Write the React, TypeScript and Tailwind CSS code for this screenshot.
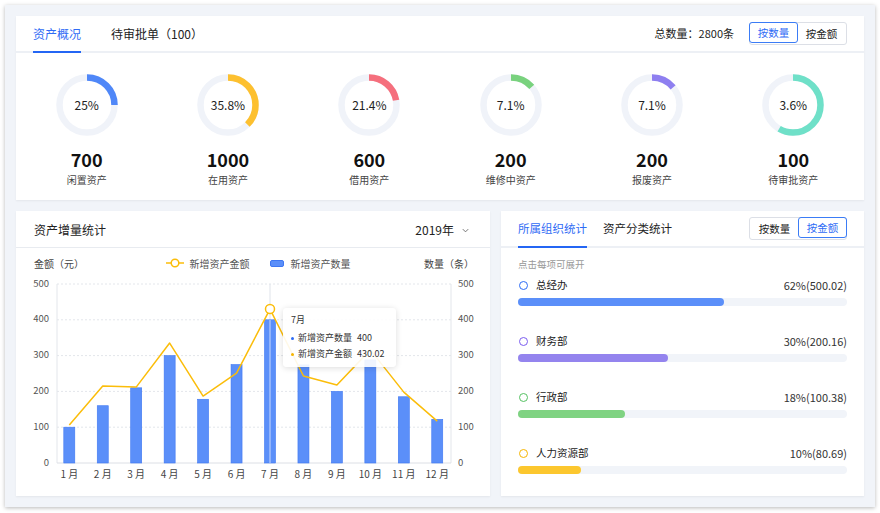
import React from 'react'

const donuts = [
  { pct: '25%', deg: 90, color: '#4f87f8', value: 700, label: '闲置资产' },
  { pct: '35.8%', deg: 135, color: '#fdc02f', value: 1000, label: '在用资产' },
  { pct: '21.4%', deg: 80, color: '#f56f7d', value: 600, label: '借用资产' },
  { pct: '7.1%', deg: 49, color: '#79d27e', value: 200, label: '维修中资产' },
  { pct: '7.1%', deg: 50, color: '#8e7ff0', value: 200, label: '报废资产' },
  { pct: '3.6%', deg: 210, color: '#6fe0c8', value: 100, label: '待审批资产' },
]

const counts = [100, 160, 210, 300, 178, 275, 400, 274, 200, 288, 185, 122]
const amounts = [106, 215, 212, 335, 187, 251, 430, 243, 218, 316, 198, 117]

const orgs = [
  { name: '总经办', value: '62%(500.02)', fill: 62.7, bar: '#5b8ff9', ring: '#2e6cf5' },
  { name: '财务部', value: '30%(200.16)', fill: 45.6, bar: '#9484ee', ring: '#7b5df0' },
  { name: '行政部', value: '18%(100.38)', fill: 32.4, bar: '#7fd382', ring: '#55c162' },
  { name: '人力资源部', value: '10%(80.69)', fill: 19.3, bar: '#fcc72e', ring: '#f6b500' },
]

function Donut({ deg, color, pct }: { deg: number; color: string; pct: string }) {
  const r = 27.5
  const c = 2 * Math.PI * r
  return (
    <div className="relative h-[62px] w-[62px]">
      <svg width={62} height={62} viewBox="0 0 62 62">
        <circle cx={31} cy={31} r={r} fill="none" stroke="#f0f3f9" strokeWidth={6.5} />
        <circle
          cx={31}
          cy={31}
          r={r}
          fill="none"
          stroke={color}
          strokeWidth={6.5}
          strokeDasharray={`${(c * deg) / 360} ${c}`}
          transform="rotate(-90 31 31)"
        />
      </svg>
      <div className="absolute inset-0 flex items-center justify-center text-[12px] text-[#222]">
        {pct}
      </div>
    </div>
  )
}

function Toggle({ active }: { active: 0 | 1 }) {
  const base = 'flex h-full w-[49px] items-center justify-center text-[10.5px]'
  return (
    <div className="flex h-[23px] rounded-[3px] border border-[#dcdfe6]">
      <div
        className={
          active === 0
            ? `${base} -m-px rounded-[3px] border border-[#3b7cf6] text-[#2f6bf5]`
            : `${base} text-[#222]`
        }
      >
        按数量
      </div>
      <div
        className={
          active === 1
            ? `${base} -m-px rounded-[3px] border border-[#3b7cf6] text-[#2f6bf5]`
            : `${base} text-[#222]`
        }
      >
        按金额
      </div>
    </div>
  )
}

function Chart() {
  const cx = (i: number) => 53.3 + 33.45 * i
  const cy = (v: number) => 189 - v * 0.358
  const ticks = [0, 100, 200, 300, 400, 500]
  const line = amounts.map((v, i) => `${cx(i)},${cy(v)}`).join(' ')
  return (
    <svg width={474} height={223} viewBox="0 0 474 223" className="block">
      {ticks.map((t) => (
        <g key={t}>
          {t > 0 && (
            <line x1={41} x2={435} y1={cy(t)} y2={cy(t)} stroke="#e3e6eb" strokeDasharray="2 2" />
          )}
          <text x={33} y={cy(t)} textAnchor="end" dominantBaseline="middle" fontSize={9.5} fill="#555">
            {t}
          </text>
          <text x={442} y={cy(t)} dominantBaseline="middle" fontSize={9.5} fill="#555">
            {t}
          </text>
        </g>
      ))}
      <line x1={41} x2={41} y1={10} y2={189} stroke="#e3e6eb" />
      <line x1={435} x2={435} y1={10} y2={189} stroke="#e3e6eb" />
      <line x1={41} x2={435} y1={189} y2={189} stroke="#dcdfe5" />
      <line x1={cx(6)} x2={cx(6)} y1={10} y2={189} stroke="#dfe3ea" />
      {counts.map((v, i) => (
        <rect
          key={i}
          x={cx(i) - 5.5}
          y={cy(v)}
          width={11}
          height={189 - cy(v)}
          fill="#5b8ff9"
          stroke="#3f77f2"
          strokeWidth={0.6}
        />
      ))}
      <line x1={cx(6)} x2={cx(6)} y1={cy(400)} y2={189} stroke="#ffffff" strokeOpacity={0.45} strokeWidth={1.5} />
      <polyline points={line} fill="none" stroke="#fbbd0a" strokeWidth={1.5} strokeLinejoin="round" />
      <circle cx={cx(6)} cy={cy(430)} r={4.5} fill="#fff" stroke="#fbbd0a" strokeWidth={1.5} />
      {counts.map((_, i) => (
        <text key={i} x={cx(i)} y={201} textAnchor="middle" dominantBaseline="middle" fontSize={10} fill="#444">
          {i + 1} 月
        </text>
      ))}
    </svg>
  )
}

export default function App() {
  return (
    <div className="h-[513px] w-[880px] bg-white pl-[5px] pt-[5px] font-['Noto_Sans_CJK_SC',sans-serif]">
      <div className="flex h-[502px] w-[870px] flex-col gap-[11px] bg-[#f1f4f9] p-[11px] shadow-[0_1px_4px_rgba(0,0,0,0.28)]">
        <section className="h-[185px] bg-white shadow-[0_1px_2px_rgba(0,0,0,0.06)]">
          <header className="flex h-[37px] items-stretch border-b-2 border-[#edf0f5] pl-[17px] pr-[17px]">
            <div className="-mb-[2px] flex items-center border-b-2 border-[#2466f4] text-[12px] text-[#2f6bf5]">
              资产概况
            </div>
            <div className="ml-[30px] flex items-center text-[12px] text-[#222]">待审批单（100）</div>
            <div className="ml-auto flex items-center gap-[15px]">
              <span className="text-[11px] text-[#222]">总数量：2800条</span>
              <Toggle active={0} />
            </div>
          </header>
          <div className="grid grid-cols-6 pt-[21px]">
            {donuts.map((d) => (
              <div key={d.label} className="flex flex-col items-center">
                <Donut deg={d.deg} color={d.color} pct={d.pct} />
                <div className="mt-[11px] text-[18px] font-bold leading-[24px] text-[#111]">{d.value}</div>
                <div className="mt-[2px] text-[10px] leading-[14px] text-[#444]">{d.label}</div>
              </div>
            ))}
          </div>
        </section>

        <div className="flex h-[285px] gap-[11px]">
          <section className="relative w-[474px] bg-white shadow-[0_1px_2px_rgba(0,0,0,0.06)]">
            <header className="flex h-[37px] items-center border-b border-[#e8ebf0] pl-[18px] pr-[20px] pt-[2px]">
              <span className="text-[12px] text-[#222]">资产增量统计</span>
              <span className="ml-auto text-[12px] text-[#222]">2019年</span>
              <svg className="ml-[7px]" width={9} height={9} viewBox="0 0 10 10" fill="none" stroke="#666" strokeWidth={1}>
                <polyline points="2 3.5 5 6.5 8 3.5" />
              </svg>
            </header>
            <div className="grid h-[26px] grid-cols-[1fr_auto_1fr] items-center pl-[18px] pr-[16px] pt-[4px] text-[10px] text-[#444]">
              <span>金额（元）</span>
              <div className="flex items-center pl-[8px]">
                <svg width={18} height={10} viewBox="0 0 18 10">
                  <line x1={0} x2={18} y1={5} y2={5} stroke="#fbbd0a" strokeWidth={1.5} />
                  <circle cx={9} cy={5} r={3.8} fill="#fff" stroke="#fbbd0a" strokeWidth={1.5} />
                </svg>
                <span className="ml-[6px] text-[#555]">新增资产金额</span>
                <span className="ml-[20px] h-[7px] w-[14px] rounded-[2px] border border-[#3f77f2] bg-[#5b8ff9]" />
                <span className="ml-[7px] text-[#555]">新增资产数量</span>
              </div>
              <span className="text-right">数量（条）</span>
            </div>
            <Chart />
            <div className="absolute left-[267px] top-[97px] h-[59px] w-[113px] rounded-[4px] bg-white/90 px-[8px] pt-[4px] text-[9px] text-[#333] shadow-[0_1px_6px_rgba(0,0,0,0.14)]">
              <div className="leading-[16px]">7月</div>
              <div className="mt-[2px] flex items-center leading-[16px]">
                <span className="mr-[4px] h-[3px] w-[3px] rounded-full bg-[#2e6cf5]" />
                新增资产数量
                <span className="ml-[5px]">400</span>
              </div>
              <div className="flex items-center leading-[16px]">
                <span className="mr-[4px] h-[3px] w-[3px] rounded-full bg-[#f6b500]" />
                新增资产金额
                <span className="ml-[5px]">430.02</span>
              </div>
            </div>
          </section>

          <section className="flex-1 bg-white shadow-[0_1px_2px_rgba(0,0,0,0.06)]">
            <header className="flex h-[37px] items-stretch border-b-2 border-[#edf0f5] pl-[17px] pr-[17px]">
              <div className="-mb-[2px] flex items-center border-b-2 border-[#2466f4] text-[11.5px] text-[#2f6bf5]">
                所属组织统计
              </div>
              <div className="ml-[16px] flex items-center text-[11.5px] text-[#222]">资产分类统计</div>
              <div className="ml-auto flex items-center">
                <Toggle active={1} />
              </div>
            </header>
            <div className="px-[17px] pt-[9px]">
              <div className="text-[9.5px] leading-[14px] text-[#999]">点击每项可展开</div>
              {orgs.map((o, i) => (
                <div key={o.name} className={i === 0 ? 'mt-[6px]' : 'mt-[27px]'}>
                  <div className="flex h-[16px] items-center text-[10.5px] text-[#222]">
                    <span
                      className="mr-[8px] ml-[1px] h-[9px] w-[9px] rounded-full border-[1.5px]"
                      style={{ borderColor: o.ring }}
                    />
                    <span>{o.name}</span>
                    <span className="ml-auto text-[11px] text-[#333]">{o.value}</span>
                  </div>
                  <div className="mt-[5px] h-[8px] rounded-full bg-[#f1f4f9]">
                    <div className="h-full rounded-full" style={{ width: `${o.fill}%`, background: o.bar }} />
                  </div>
                </div>
              ))}
            </div>
          </section>
        </div>
      </div>
    </div>
  )
}
